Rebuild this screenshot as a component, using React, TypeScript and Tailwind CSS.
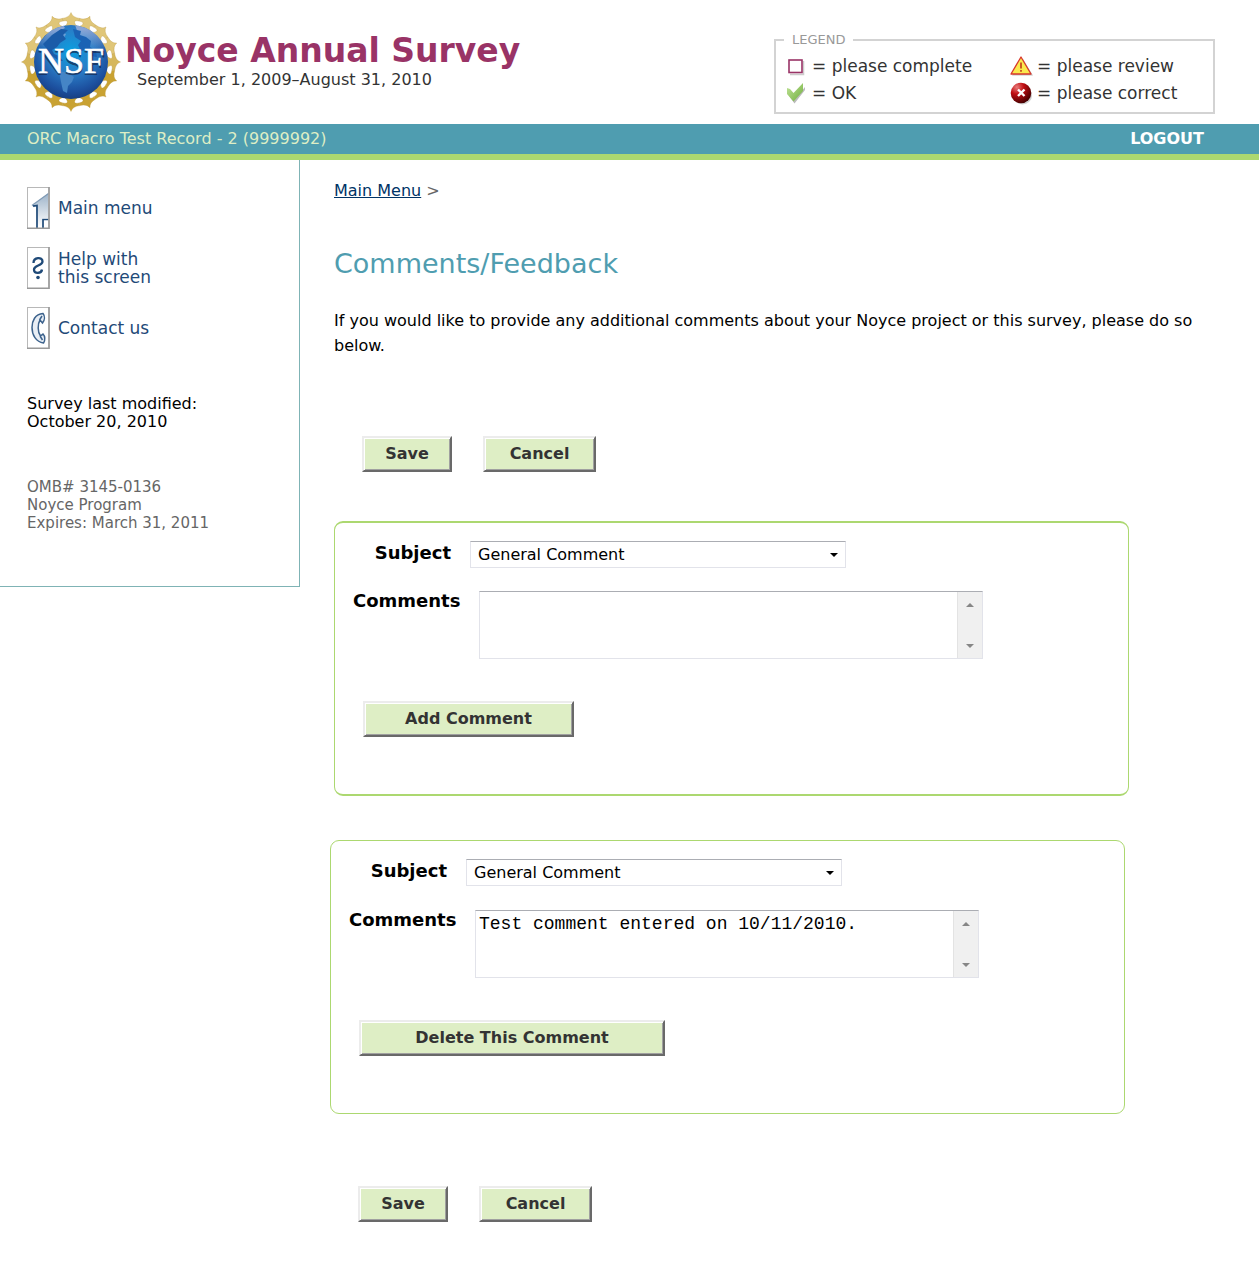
import { ReactNode } from "react";

const ANGLES = Array.from({ length: 16 }, (_, i) => i * 22.5);

function NsfLogo() {
  return (
    <svg viewBox="-50 -50 100 100" className="size-[100px] shrink-0" role="img" aria-label="NSF">
      <defs>
        <radialGradient id="globe" cx="0.5" cy="0.35" r="0.68">
          <stop offset="0" stopColor="#0a9fe0" />
          <stop offset="0.45" stopColor="#2a7cc6" />
          <stop offset="0.8" stopColor="#1c4f9e" />
          <stop offset="1" stopColor="#173a78" />
        </radialGradient>
        <linearGradient id="haze" x1="0" y1="0" x2="0" y2="1">
          <stop offset="0.1" stopColor="#a9b4dc" stopOpacity="0.75" />
          <stop offset="0.55" stopColor="#a9b4dc" stopOpacity="0" />
        </linearGradient>
        <linearGradient id="gold" x1="0" y1="0" x2="0" y2="1">
          <stop offset="0" stopColor="#e2c878" />
          <stop offset="1" stopColor="#c9a23a" />
        </linearGradient>
        <clipPath id="globeClip">
          <circle r="37" />
        </clipPath>
      </defs>
      <g fill="#d3b052" stroke="#b8953a" strokeWidth="0.3">
        {ANGLES.map((a) => (
          <path
            key={a}
            d="M0-49.500Q1.500-44.500 8.700-43.600L8.100-40.900Q3.200-42 3.600-39.500Q4-37.500 6-36H-6Q-4-37.500-3.600-39.500Q-3.200-42-8.100-40.900L-8.700-43.600Q-1.500-44.500 0-49.500Z"
            fill={a < 80 || a > 280 ? "#e0c678" : a < 110 || a > 250 ? "#d6b75c" : "#c9a232"}
            transform={`rotate(${a})`}
          />
        ))}
      </g>
      <circle r="37" fill="url(#globe)" />
      <g clipPath="url(#globeClip)">
        <path d="M-29-22L-20-33L-8-37L-6-34L-12-31L-5-28L-8-22L-14-17L-20-14L-30-2L-38 4L-40-16Z" fill="url(#haze)" />
        <path d="M4-37L12-37L30-26L38-8L37 8L28 0L24-8L18-10L12-17L16-22L8-26Z" fill="url(#haze)" />
        <path
          d="M-19-27L-10-33L-3-32L-8-27L-5-23L-11-19L-14-15L-19-12L-17-8L-12-6L-8-1L-12-1L-20-7L-25-14L-28-18Z"
          fill="#1b5ba8"
        />
        <path d="M2-33L10-31L9-27L15-25L20-21L19-15L25-11L26-5L19-6L15-12L10-11L7-17L10-21L4-25Z" fill="#1b62b4" />
        <path d="M-12 9L-3 11L3 15L1 20L-3 24L-4 31L-8 29L-10 20Z" fill="#4585c6" />
      </g>
      <text x="1" y="13" textAnchor="middle" className="font-['Liberation_Serif'] text-[36px] font-bold" fill="#14264d" opacity="0.7">
        NSF
      </text>
      <text x="0" y="11" textAnchor="middle" className="font-['Liberation_Serif'] text-[36px]" fill="white" stroke="white" strokeWidth="0.6">
        NSF
      </text>
    </svg>
  );
}

function BoxIcon() {
  return (
    <svg viewBox="0 0 22 24" className="h-6 w-[22px]" aria-hidden="true">
      <path d="M5 20.500H18.500V7" fill="none" stroke="#ccc" strokeWidth="1.500" />
      <rect x="4" y="6" width="13" height="12.500" fill="#fff" stroke="#993366" strokeWidth="1.600" />
    </svg>
  );
}

function CheckIcon() {
  return (
    <svg viewBox="0 0 22 24" className="h-6 w-[22px]" aria-hidden="true">
      <defs>
        <linearGradient id="check" x1="0" y1="0" x2="1" y2="1">
          <stop offset="0" stopColor="#c3e59b" />
          <stop offset="1" stopColor="#6fae3c" />
        </linearGradient>
      </defs>
      <path d="M4 15L9.500 22.500L20 9V6L10 18Z" fill="#bbb" />
      <path d="M2 7L5 8L8.500 12L18 2V10L8.500 20.500L2 13Z" fill="url(#check)" />
    </svg>
  );
}

function WarnIcon() {
  return (
    <svg viewBox="0 0 24 24" className="size-6" aria-hidden="true">
      <path d="M3 21.500H24L14 5Z" fill="#aaa" opacity="0.7" />
      <path d="M12 3L22 20H2Z" fill="#fbe94e" stroke="#d8382c" strokeWidth="1.300" strokeLinejoin="round" />
      <path d="M12 8.500V14.500M12 16V17.800" stroke="#c03a1a" strokeWidth="1.600" />
    </svg>
  );
}

function ErrorIcon() {
  return (
    <svg viewBox="0 0 24 24" className="size-6" aria-hidden="true">
      <defs>
        <radialGradient id="err" cx="0.3" cy="0.22" r="0.85">
          <stop offset="0" stopColor="#e87a7a" />
          <stop offset="0.4" stopColor="#c00d12" />
          <stop offset="1" stopColor="#3d0000" />
        </radialGradient>
      </defs>
      <ellipse cx="13.500" cy="14.500" rx="9.500" ry="9" fill="#bbb" opacity="0.7" />
      <circle cx="12" cy="12" r="10.300" fill="url(#err)" />
      <path d="M9 8.500L15.500 15M15.500 8.500L9 15" stroke="#fff" strokeWidth="2.400" />
    </svg>
  );
}

function NavTile({ children }: { children: ReactNode }) {
  return (
    <svg viewBox="0 0 23 42" className="h-[42px] w-[23px] shrink-0" aria-hidden="true">
      <rect x="0.500" y="0.500" width="21.500" height="41" fill="#fff" stroke="#b8b8b8" />
      {children}
      <path d="M22 0V41.200H0" fill="none" stroke="#999" strokeWidth="1.600" />
    </svg>
  );
}

function HouseArt() {
  return (
    <>
      <defs>
        <linearGradient id="house" x1="0" y1="0" x2="0" y2="1">
          <stop offset="0" stopColor="#9db3c9" />
          <stop offset="1" stopColor="#fff" />
        </linearGradient>
      </defs>
      <path d="M6 18L21 6.500V31H15V40H9V19Z" fill="url(#house)" />
      <path d="M21.500 6.500L5.500 18L7 19.500L9.500 18.500" fill="none" stroke="#7f9ab5" strokeWidth="1.300" />
      <path d="M6 19L10 18.500V41M16 41V32.500H21.500" fill="none" stroke="#1f4a78" strokeWidth="1.700" />
    </>
  );
}

function QuestionArt() {
  return (
    <>
      <path
        d="M6.500 16C6.500 10 15.500 9.500 15.500 14.500C15.500 19 7 18 7 22.500C7 27 14.500 27 15 22.500"
        fill="none"
        stroke="#1f4a78"
        strokeWidth="2.300"
      />
      <circle cx="11" cy="30.500" r="1.800" fill="#1f4a78" />
    </>
  );
}

function PhoneArt() {
  return (
    <path
      d="M16 6.500C8 7 5 14 5 20.500C5 28 9 35 16.500 36C18.500 33 18 29 16 27L13.500 29C10.500 25 10.500 17 13 13L15.500 16C18 13 18 9 16 6.500ZM15 9L12.500 13M15.500 33L13 29"
      fill="#e8eef5"
      stroke="#3c628c"
      strokeWidth="1.500"
    />
  );
}

function NavLink({ art, children }: { art: ReactNode; children: ReactNode }) {
  return (
    <a href="#" className="flex items-center gap-2 text-[17px] leading-[18px] text-[#1f4a78]">
      <NavTile>{art}</NavTile>
      <span>{children}</span>
    </a>
  );
}

function FormButton({ width, children }: { width: string; children: ReactNode }) {
  return (
    <button
      type="button"
      className={`${width} h-9 border-2 border-t-[#ececec] border-r-[#696969] border-b-[#696969] border-l-[#ececec] bg-[#deeec5] text-base font-bold text-[#333] shadow-[inset_1px_1px_0_#fff,inset_-1px_-1px_0_#a0a0a0]`}
    >
      {children}
    </button>
  );
}

function FormActions() {
  return (
    <div className="flex gap-[31px]">
      <FormButton width="w-[90px]">Save</FormButton>
      <FormButton width="w-[113px]">Cancel</FormButton>
    </div>
  );
}

function CommentPanel({ id, text, thick, action }: { id: string; text: string; thick?: boolean; action: ReactNode }) {
  return (
    <section
      className={`${thick ? "border-y-2" : "border-y"} w-[795px] max-w-full rounded-[9px] border-x border-[#acd870] pt-[18px] pb-[57px] pl-[18px]`}
    >
      <div className="flex">
        <label htmlFor={`subject-${id}`} className="w-[98px] text-right text-lg leading-6 font-bold">
          Subject
        </label>
        <div className="relative ml-[19px] w-[376px]">
          <select
            id={`subject-${id}`}
            className="h-[27px] w-full appearance-none border border-[#e2e3ea] border-t-[#abadb3] bg-white px-[7px] text-base leading-6"
          >
            <option>General Comment</option>
          </select>
          <svg viewBox="0 0 8 4" className="pointer-events-none absolute top-3 right-2 h-1 w-2" aria-hidden="true">
            <path d="M0 0H8L4 4Z" />
          </svg>
        </div>
      </div>
      <div className={`${thick ? "mt-[23px]" : "mt-6"} flex`}>
        <label htmlFor={`comments-${id}`} className="w-[107px] text-right text-lg leading-5 font-bold">
          Comments
        </label>
        <div className="ml-[19px] flex h-[68px] w-[504px] border border-[#e2e3ea] border-t-[#abadb3]">
          <textarea
            id={`comments-${id}`}
            defaultValue={text}
            className="min-w-0 flex-1 resize-none overflow-hidden px-[3px] py-px font-['Liberation_Mono',monospace] text-lg leading-6 outline-none"
          />
          <div className="flex w-[25px] flex-col items-center justify-between border-l border-[#e3e3e3] bg-[#f0f0f0] pt-[11px] pb-2.5" aria-hidden="true">
            <svg viewBox="0 0 8 4" className="h-1 w-2">
              <path d="M0 4H8L4 0Z" fill="#868686" />
            </svg>
            <svg viewBox="0 0 8 4" className="h-1 w-2">
              <path d="M0 0H8L4 4Z" fill="#868686" />
            </svg>
          </div>
        </div>
      </div>
      <div className="mt-[42px] pl-[10px]">{action}</div>
    </section>
  );
}

function LegendItem({ icon, children }: { icon: ReactNode; children: ReactNode }) {
  return (
    <div className="flex items-center gap-1">
      <span className="flex w-6 justify-center">{icon}</span>
      <span>= {children}</span>
    </div>
  );
}

export default function App() {
  return (
    <div className="bg-white font-['DejaVu_Sans',sans-serif] text-base text-black">
      <header className="flex h-[124px] items-start justify-between pr-11 pl-[21px]">
        <div className="flex items-start pt-3">
          <NsfLogo />
          <div className="pt-5 pl-1">
            <h1 className="text-[33px] leading-[38px] font-bold text-[#993366]">Noyce Annual Survey</h1>
            <p className="pl-3 text-base leading-5 text-[#333]">September 1, 2009–August 31, 2010</p>
          </div>
        </div>
        <fieldset className="mt-8 h-[82px] w-[441px] border-2 border-[#d3d3d3] pl-2 text-[#333]">
          <legend className="px-2 text-[13px] leading-4 text-[#999]">LEGEND</legend>
          <div className="grid grid-cols-[225px_auto] gap-y-[3px] pt-1.5 text-[17px] leading-6">
            <LegendItem icon={<BoxIcon />}>please complete</LegendItem>
            <LegendItem icon={<WarnIcon />}>please review</LegendItem>
            <LegendItem icon={<CheckIcon />}>OK</LegendItem>
            <LegendItem icon={<ErrorIcon />}>please correct</LegendItem>
          </div>
        </fieldset>
      </header>

      <div className="flex h-9 items-center justify-between border-b-6 border-[#acd870] bg-[#4f9db0] pr-[55px] pl-[27px]">
        <span className="text-[#deeec5]">ORC Macro Test Record - 2 (9999992)</span>
        <a href="#" className="font-bold text-white">
          LOGOUT
        </a>
      </div>

      <div className="flex items-start">
        <aside className="w-[300px] shrink-0 border-r border-b border-[#7fb3b5] pt-[27px] pb-[54px] pl-[27px]">
          <nav className="flex flex-col gap-[18px]">
            <NavLink art={<HouseArt />}>Main menu</NavLink>
            <NavLink art={<QuestionArt />}>
              Help with
              <br />
              this screen
            </NavLink>
            <NavLink art={<PhoneArt />}>Contact us</NavLink>
          </nav>
          <p className="mt-[46px] leading-[18px]">
            Survey last modified:
            <br />
            October 20, 2010
          </p>
          <p className="mt-[47px] text-[15px] leading-[18px] text-[#666]">
            OMB# 3145-0136
            <br />
            Noyce Program
            <br />
            Expires: March 31, 2011
          </p>
        </aside>

        <main className="min-w-0 flex-1 pt-[19px] pr-8 pb-[54px] pl-[30px]">
          <div className="pl-1">
            <p className="leading-6 text-[#666]">
              <a href="#" className="text-[#003366] underline">
                Main Menu
              </a>{" "}
              &gt;
            </p>
            <h2 className="mt-[43px] text-[27px] leading-9 text-[#4f9db0]">Comments/Feedback</h2>
            <p className="mt-[26px] leading-[25px]">
              If you would like to provide any additional comments about your Noyce project or this survey, please do so below.
            </p>
            <div className="mt-[78px] pl-7">
              <FormActions />
            </div>
            <div className="mt-[49px]">
              <CommentPanel id="new" text="" thick action={<FormButton width="w-[211px]">Add Comment</FormButton>} />
            </div>
          </div>
          <div className="mt-11">
            <CommentPanel
              id="saved"
              text="Test comment entered on 10/11/2010."
              action={<FormButton width="w-[306px]">Delete This Comment</FormButton>}
            />
          </div>
          <div className="mt-[72px] pl-7">
            <FormActions />
          </div>
        </main>
      </div>
    </div>
  );
}
